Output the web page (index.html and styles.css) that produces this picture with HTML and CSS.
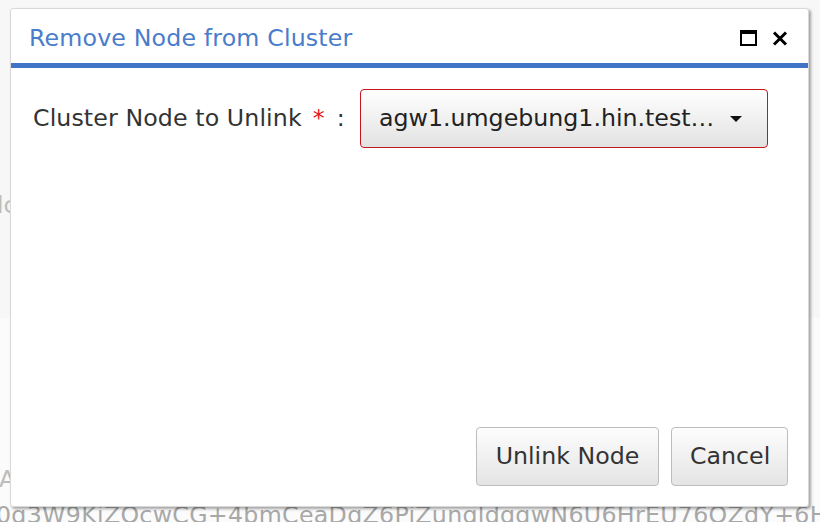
FILE: index.html
```html
<!DOCTYPE html>
<html>
<head>
<meta charset="utf-8">
<link rel="stylesheet" href="styles.css">
</head>
<body>
<div class="page">
  <div class="bg-top">
    <div class="bg-line bg-line-1">lc</div>
  </div>
  <div class="bg-bottom">
    <div class="bg-line bg-line-2">6A</div>
    <div class="bg-line bg-line-3">0g3W9KiZOcwCG+4bmCeaDqZ6PiZungldqgwN6U6HrEU76OZdY+6H</div>
  </div>
</div>
<div class="dialog">
  <div class="dialog-header">
    <div class="dialog-title">Remove Node from Cluster</div>
    <div class="dialog-tools">
      <span class="tool-max"></span>
      <svg class="tool-close" width="16" height="15" viewBox="0 0 16 15"><path d="M2 1.5 L14 13.5 M14 1.5 L2 13.5" stroke="#000" stroke-width="3"/></svg>
    </div>
  </div>
  <div class="dialog-body">
    <div class="form-row">
      <label class="form-label">Cluster Node to Unlink<span class="req">*</span><span class="colon">:</span></label>
      <div class="select">
        <span class="select-text">agw1.umgebung1.hin.test…</span>
        <span class="caret"></span>
      </div>
    </div>
  </div>
  <div class="dialog-footer">
    <button class="btn btn-unlink">Unlink Node</button>
    <button class="btn btn-cancel">Cancel</button>
  </div>
</div>
</body>
</html>
```

FILE: styles.css
```css
* { box-sizing: border-box; }
html, body { margin: 0; padding: 0; }
body {
  width: 820px;
  height: 522px;
  overflow: hidden;
  font-family: "DejaVu Sans", Verdana, sans-serif;
  background: #ffffff;
  position: relative;
}
.page {
  display: flex;
  flex-direction: column;
  height: 522px;
  overflow: hidden;
}
.bg-top {
  flex: 0 0 318px;
  background: #f7f7f7;
  padding-top: 191px;
}
.bg-bottom {
  flex: 1 1 auto;
  min-height: 0;
  overflow: hidden;
  background: #fbfbfb;
  display: flex;
  flex-direction: column;
}
.bg-line {
  flex: 0 0 auto;
  font-size: 23.7px;
  line-height: 28px;
  color: #bdbdbd;
  white-space: nowrap;
}
.bg-line-1 { margin-left: -3px; }
.bg-line-2 { margin-top: 147px; margin-left: -16px; }
.bg-line-3 { margin-top: 8px; margin-left: -4px; color: #a8a8a8; letter-spacing: 0.3px; }

.dialog {
  position: absolute;
  left: 10px;
  top: 8px;
  width: 799px;
  height: 499px;
  background: #fff;
  border: 1px solid #d8d8d8;
  border-radius: 3px;
  box-shadow: 2px 2px 3px rgba(0,0,0,0.35);
  display: flex;
  flex-direction: column;
}
.dialog-header {
  height: 59px;
  border-bottom: 5px solid #3f74c6;
  display: flex;
  align-items: center;
  justify-content: space-between;
  padding: 4px 20px 0 18px;
}
.dialog-title {
  font-size: 23.7px;
  color: #4a7ccb;
  letter-spacing: 0.15px;
}
.dialog-tools {
  display: flex;
  align-items: center;
  gap: 15px;
}
.tool-max {
  width: 17px;
  height: 16px;
  border: 2px solid #000;
  border-top-width: 4px;
}
.tool-close { display: block; }

.dialog-body {
  flex: 1;
  padding: 21px 40px 0 22px;
}
.form-row {
  display: flex;
  align-items: center;
}
.form-label {
  font-size: 23.7px;
  color: #333;
  width: 327px;
  padding-bottom: 2px;
  letter-spacing: 0.1px;
}
.req { color: #e8161b; margin-left: 11px; }
.colon { margin-left: 12px; }
.select {
  width: 408px;
  height: 59px;
  border: 1px solid #c4161c;
  border-radius: 4px;
  background: linear-gradient(#ffffff, #e2e2e2);
  display: flex;
  align-items: center;
  justify-content: space-between;
  padding: 0 25px 0 18px;
}
.select-text {
  font-size: 23.7px;
  color: #222;
  padding-bottom: 2px;
}
.caret {
  width: 0;
  height: 0;
  border-left: 6px solid transparent;
  border-right: 6px solid transparent;
  border-top: 6px solid #111;
  margin-top: 1px;
}

.dialog-footer {
  display: flex;
  justify-content: flex-end;
  gap: 12px;
  padding: 0 20px 20px 0;
}
.btn {
  font-family: "DejaVu Sans", Verdana, sans-serif;
  font-size: 23.7px;
  color: #333;
  height: 59px;
  padding: 0 18px 2px;
  border: 1px solid #bdbdbd;
  border-radius: 4px;
  background: linear-gradient(#fdfdfd, #e4e4e4);
}
.btn-unlink { width: 183px; }
.btn-cancel { width: 117px; }
```
